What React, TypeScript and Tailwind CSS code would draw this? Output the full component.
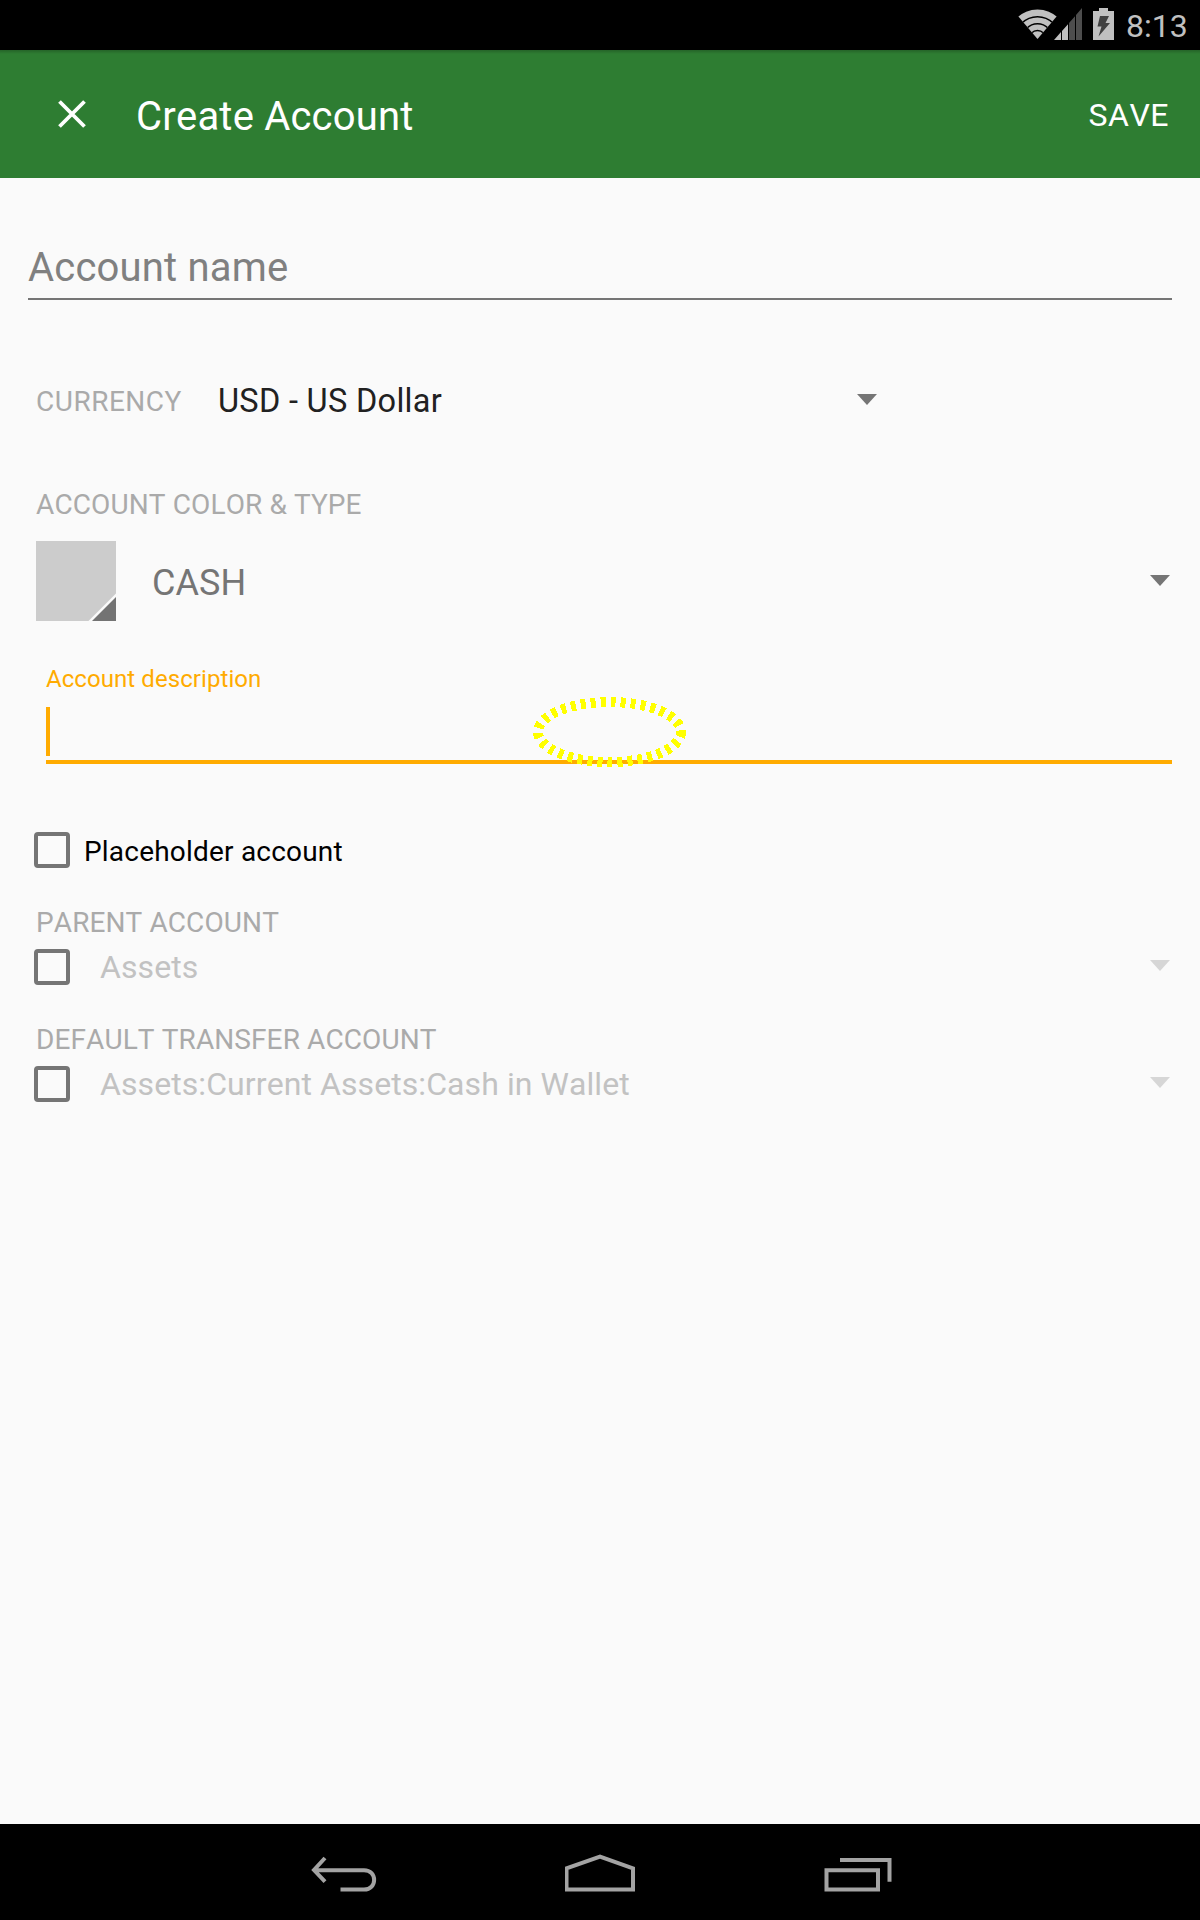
import React from "react";

function Caret({ className }: { className: string }) {
  return (
    <svg width="20" height="11" viewBox="0 0 20 11" className={className}>
      <path d="M0 0H20L10 11Z" fill="currentColor" />
    </svg>
  );
}

function CheckBox() {
  return <div className="h-9 w-9 shrink-0 rounded-[4px] border-4 border-[#757575]" />;
}

function StatusBar() {
  return (
    <div className="flex h-[50px] justify-end bg-black pr-3 text-[#c0c0c0]">
      <svg width="100" height="50" viewBox="1016 0 100 50" className="shrink-0">
        <defs>
          <clipPath id="fan">
            <path d="M1037.5 39L1018.2 16.2Q1027 6 1037.5 6T1056.800 16.2Z" />
          </clipPath>
        </defs>
        <g clipPath="url(#fan)">
          <circle cx="1037.5" cy="39" r="29.5" fill="#c0c0c0" />
          <g fill="none" stroke="#000" strokeWidth="1.5">
            <circle cx="1037.5" cy="39" r="22.2" />
            <circle cx="1037.5" cy="39" r="15.2" />
            <circle cx="1037.5" cy="39" r="8.4" />
          </g>
        </g>
        <path d="M1054 40L1061 32V40ZM1062 40V31L1068 24.2V40Z" fill="#c0c0c0" />
        <path d="M1069 40V23L1075 16.2V40ZM1076 40V15L1082 8V40Z" fill="#4d4d4d" />
        <path d="M1093 11H1099V8H1108V11H1114V40H1093Z" fill="#c0c0c0" />
        <path d="M1100 16H1109L1105.5 23H1110L1098.5 36.5L1101.500 26.500H1097.500Z" fill="#404040" />
      </svg>
      <span className="ml-[10px] mt-[6px] w-[62px] whitespace-nowrap text-[32px] leading-10">8:13</span>
    </div>
  );
}

function Header() {
  return (
    <header className="flex h-32 items-center bg-[#2e7d32] bg-[linear-gradient(to_bottom,rgba(0,0,0,0.2),transparent_4px)] text-white">
      <svg width="28" height="28" viewBox="0 0 28 28" className="ml-[58px] shrink-0">
        <path d="M1.500 1.500L26.500 26.500M26.500 1.500L1.500 26.500" stroke="#fff" strokeWidth="3.800" />
      </svg>
      <h1 className="ml-[50px] mt-1.5 text-[40px] leading-[48px] tracking-[0.2px]">Create Account</h1>
      <span className="ml-auto mr-[31px] mt-0.5 text-[32px] leading-10 tracking-[0.5px]">SAVE</span>
    </header>
  );
}

function TransferRow({ label, value }: { label: string; value: string }) {
  return (
    <div className="h-[117px]">
      <div className="h-8 pl-9 text-[28px] leading-[34px] tracking-[0.1px] text-[#aaaaaa]">{label}</div>
      <div className="mt-[11px] flex h-9 items-center pl-[34px] pr-[30px]">
        <CheckBox />
        <span className="ml-[30px] text-[32px] leading-9 tracking-[0.08px] text-[#c2c2c2]">{value}</span>
        <Caret className="-mt-[3px] ml-auto text-[#d6d6d6]" />
      </div>
    </div>
  );
}

export default function App() {
  return (
    <div className="flex h-[1920px] w-[1200px] flex-col overflow-hidden bg-[#fafafa] font-['Roboto',sans-serif] [font-kerning:none]">
      <StatusBar />
      <Header />
      <main className="flex-1">
        <div className="mx-7 mt-[66px] h-14 border-b-2 border-[#757575] text-[40px] leading-[48px] tracking-[0.2px] text-[#808080]">
          Account name
        </div>
        <div className="mt-[81px] flex h-10 items-center pl-9">
          <span className="mt-0.5 w-[182px] text-[28px] leading-10 tracking-[0.5px] text-[#aaaaaa]">CURRENCY</span>
          <span className="w-[639px] text-[32.5px] leading-10 tracking-[0.3px] text-[#212121]">USD - US Dollar</span>
          <Caret className="-mt-[3px] text-[#757575]" />
        </div>
        <div className="mt-[67px] h-8 pl-9 text-[28px] leading-[34px] tracking-[0.12px] text-[#aaaaaa]">ACCOUNT COLOR &amp; TYPE</div>
        <div className="mt-[21px] flex h-20 items-center pl-9 pr-[30px]">
          <svg width="80" height="80" viewBox="0 0 80 80" className="shrink-0">
            <path d="M0 0H80V80H0Z" fill="#cccccc" />
            <path d="M52.500 80L80 52.500V80Z" fill="#fafafa" />
            <path d="M56 80L80 56V80Z" fill="#737373" />
          </svg>
          <span className="ml-9 mt-1 text-[36px] leading-10 tracking-[0.1px] text-[#757575]">CASH</span>
          <Caret className="-mt-[2px] ml-auto text-[#757575]" />
        </div>
        <div className="relative ml-[46px] mr-7 mt-[43px] h-[100px] border-b-4 border-[#ffab00]">
          <div className="text-2xl leading-[30px] tracking-[0.07px] text-[#ffab00]">Account description</div>
          <div className="mt-[13px] h-[49px] w-1 bg-[#ffab00]" />
          <svg
            width="160"
            height="80"
            viewBox="0 0 160 80"
            className="absolute left-[484px] top-7"
            shapeRendering="crispEdges"
          >
            <ellipse cx="79.500" cy="40" rx="71.500" ry="30" fill="none" stroke="#ffff00" strokeWidth="10" strokeDasharray="5 5" />
          </svg>
        </div>
        <div className="mt-[68px] flex h-9 items-center pl-[34px]">
          <CheckBox />
          <span className="ml-3.5 mt-[3px] text-[28px] leading-9 tracking-[0.2px] text-black">Placeholder account</span>
        </div>
        <div className="mt-[38px]">
          <TransferRow label="PARENT ACCOUNT" value="Assets" />
          <TransferRow label="DEFAULT TRANSFER ACCOUNT" value="Assets:Current Assets:Cash in Wallet" />
        </div>
      </main>
      <nav className="flex h-24 items-center justify-between bg-black pl-[310px] pr-[308px]">
        <svg width="68" height="40" viewBox="310 1852 68 40" fill="none" stroke="#a3a3a3" strokeWidth="4">
          <path d="M325 1858L314 1870L325 1881.700M313.500 1870.200H364C377.500 1870.200 377.500 1889.600 364 1889.600H340.500" />
        </svg>
        <svg width="72" height="40" viewBox="565 1852 72 40" fill="none" stroke="#a3a3a3" strokeWidth="4">
          <path d="M566.500 1889.600V1868.300L600 1856.500L633 1868.300V1889.600Z" />
        </svg>
        <svg width="68" height="40" viewBox="824 1852 68 40" fill="none" stroke="#a3a3a3" strokeWidth="4">
          <path d="M826.500 1870.200H878V1889.600H826.500ZM840 1860H889.500V1881.700" />
        </svg>
      </nav>
    </div>
  );
}
